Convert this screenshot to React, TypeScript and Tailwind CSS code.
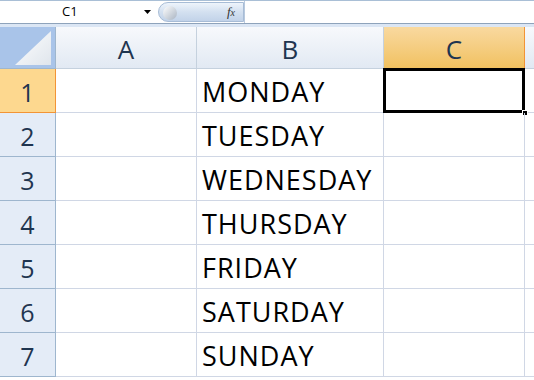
import React from "react";

const days = ["MONDAY", "TUESDAY", "WEDNESDAY", "THURSDAY", "FRIDAY", "SATURDAY", "SUNDAY"];

const cols = ["A", "B", "C"];

const colWidth: Record<string, string> = {
  A: "w-[141px]",
  B: "w-[187px]",
  C: "w-[141px]",
};

const FormulaBar = () => (
  <div className="flex h-[24px] border-t border-[#a9bfd6] border-b border-b-[#8ea3bb] bg-white">
    <div className="relative flex w-[158px] items-center text-[13px] text-black">
      <span className="pl-[62px]">C1</span>
      <svg className="absolute left-[144px] top-[9px]" width="7" height="4" viewBox="0 0 7 4">
        <path d="M0 0h7L3.5 4z" fill="#000" />
      </svg>
    </div>
    <div className="relative my-[1px] flex w-[86px] items-center justify-end rounded-l-full border border-[#a7bcd6] bg-gradient-to-b from-[#eef4fb] via-[#d3e0f0] to-[#c2d3e9] pr-[8px]">
      <div className="absolute left-[4px] top-[3px] h-[14px] w-[14px] rounded-full bg-gradient-to-br from-[#ffffff] to-[#a9b4c2]" />
      <span className="italic text-[13px] text-[#333]" style={{ fontFamily: '"Liberation Serif", serif' }}>
        f<span className="text-[10px]">x</span>
      </span>
    </div>
    <div className="flex-1 border-l border-[#b8c9de]" />
  </div>
);

const App = () => {
  return (
    <div className="h-[380px] w-[534px] overflow-hidden bg-white" style={{ fontFamily: '"Open Sans", "Noto Sans", sans-serif' }}>
      <FormulaBar />
      <div className="h-[3px] bg-[#dbe6f4]" />
      {/* column headers */}
      <div className="flex h-[42px]">
        <div className="relative w-[56px] border-r border-b border-[#9eb6ce] bg-[#a9c4e9]">
          <svg className="absolute bottom-[3px] right-[4px]" width="36" height="34" viewBox="0 0 36 34">
            <defs>
              <linearGradient id="tri" x1="0" y1="0" x2="1" y2="1">
                <stop offset="0" stopColor="#ffffff" />
                <stop offset="1" stopColor="#dfe5ec" />
              </linearGradient>
            </defs>
            <path d="M36 0V34H0z" fill="url(#tri)" />
          </svg>
        </div>
        {cols.map((c) =>
          c === "C" ? (
            <div
              key={c}
              className={`${colWidth[c]} flex items-center justify-center border-r border-b border-[#f29436] bg-gradient-to-b from-[#f9d99f] to-[#f1c15f] pt-[3px] text-[26px] text-[#1f3550]`}
            >
              {c}
            </div>
          ) : (
            <div
              key={c}
              className={`${colWidth[c]} flex items-center justify-center border-r border-b border-[#c5d1de] bg-gradient-to-b from-[#f7f9fc] to-[#e2e9f3] pt-[3px] text-[26px] text-[#1f3550]`}
            >
              {c}
            </div>
          )
        )}
        <div className="flex-1 border-b border-[#c5d1de] bg-gradient-to-b from-[#f7f9fc] to-[#e2e9f3]" />
      </div>
      {/* rows */}
      {days.map((day, i) => (
        <div key={day} className="flex h-[44px]">
          <div
            className={
              i === 0
                ? "flex w-[56px] items-center justify-center border-r border-b border-[#f29436] bg-[#fdd88f] pt-[4px] text-[25px] text-[#1f3550]"
                : "flex w-[56px] items-center justify-center border-r border-b border-[#9eb6ce] bg-[#e4ecf7] pt-[4px] text-[25px] text-[#1f3550]"
            }
          >
            {i + 1}
          </div>
          <div className="w-[141px] border-r border-b border-[#d0d7e5]" />
          <div className="flex w-[187px] items-center border-r border-b border-[#d0d7e5] pl-[5px] pt-[4px] text-[27px] tracking-[1px] text-black">
            {day}
          </div>
          <div className="relative w-[141px] border-r border-b border-[#d0d7e5]">
            {i === 0 && (
              <>
                <div className="absolute -left-[1px] -top-[1px] h-[45px] w-[142px] border-[3px] border-black" />
                <div className="absolute -bottom-[4px] -right-[4px] h-[6px] w-[6px] border border-white bg-black" />
              </>
            )}
          </div>
          <div className="flex-1 border-b border-[#d0d7e5]" />
        </div>
      ))}
    </div>
  );
};

export default App;
